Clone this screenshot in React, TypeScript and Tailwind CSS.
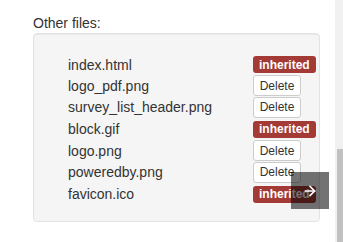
import { ArrowRight } from "lucide-react";

type FileRow = { name: string; inherited: boolean; h: string };

const files: FileRow[] = [
  { name: "index.html", inherited: true, h: "h-[21px]" },
  { name: "logo_pdf.png", inherited: false, h: "h-[21px]" },
  { name: "survey_list_header.png", inherited: false, h: "h-[22px]" },
  { name: "block.gif", inherited: true, h: "h-[22px]" },
  { name: "logo.png", inherited: false, h: "h-[21px]" },
  { name: "poweredby.png", inherited: false, h: "h-[22px]" },
  { name: "favicon.ico", inherited: true, h: "h-[22px]" },
];

export default function App() {
  return (
    <div
      className="relative flex w-[343px] h-[242px] overflow-hidden bg-white text-[#333] text-[14px] leading-[20px]"
      style={{ fontFamily: '"Liberation Sans", Arial, sans-serif' }}
    >
      <div className="flex-1 pl-[33px] pt-[13px]">
        <div>Other files:</div>
        <div className="w-[287px] rounded-[4px] border border-[#e3e3e3] bg-[#f5f5f5] pt-[20px] pb-[16px] pl-[34px] shadow-[inset_0_1px_1px_rgba(0,0,0,0.05)]">
          {files.map((f) => (
            <div key={f.name} className={`flex items-center ${f.h}`}>
              <span className="w-[185px]">{f.name}</span>
              {f.inherited ? (
                <span className="flex items-center h-[17px] px-[6px] rounded-[3px] bg-[#a33a35] text-white text-[12px] font-bold leading-none">
                  inherited
                </span>
              ) : (
                <button className="flex items-center justify-center w-[48px] h-[21px] rounded-[3px] border border-[#ccc] bg-white text-[12px] text-[#333] leading-none">
                  Delete
                </button>
              )}
            </div>
          ))}
        </div>
      </div>

      <div className="w-[8px] h-full bg-[#f1f1f1] pl-[2px]">
        <div className="mt-[149px] h-[93px] w-[6px] bg-[#c1c1c1]" />
      </div>

      <div className="absolute left-[291px] top-[172px] flex items-center justify-center w-[38px] h-[37px] bg-[rgba(0,0,0,0.55)]">
        <ArrowRight size={16} strokeWidth={2.5} className="text-white" />
      </div>
    </div>
  );
}
